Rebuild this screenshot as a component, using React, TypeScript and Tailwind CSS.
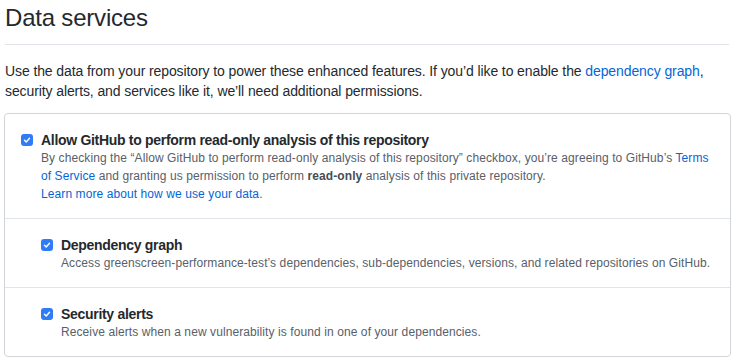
function Check() {
  return (
    <span className="mt-[3px] flex h-[12px] w-[12px] shrink-0 items-center justify-center rounded-[3px] bg-[#2f7cf6]">
      <svg viewBox="0 0 12 12" className="h-[10px] w-[10px]" fill="none">
        <path d="M3 6.2 L5.1 8.3 L9 3.8" stroke="white" strokeWidth="1.7" strokeLinecap="round" strokeLinejoin="round" />
      </svg>
    </span>
  );
}

export default function App() {
  return (
    <div className="min-h-[361px] w-[734px] bg-white px-[5px] text-[#24292e]" style={{ fontFamily: "'Liberation Sans', Arial, sans-serif" }}>
      <div className="border-b border-[#e1e4e8] pb-[11px] pt-[3px]">
        <h2 className="text-[24px] font-normal leading-[30px] tracking-[-0.2px]">Data services</h2>
      </div>

      <p className="mt-[16px] text-[14px] leading-[20px] tracking-[-0.1px]">
        Use the data from your repository to power these enhanced features. If you’d like to enable the{" "}
        <a className="text-[#0366d6]">dependency graph</a>, security alerts, and services like it, we’ll need additional
        permissions.
      </p>

      <div className="mt-[12px] mr-[-2px] ml-[-1px] rounded-[4px] border border-[#d1d5da]">
        <div className="flex gap-[8px] border-b border-[#e1e4e8] px-[16px] pb-[15px] pt-[17px]">
          <Check />
          <div>
            <div className="text-[14px] font-bold leading-[18px] tracking-[-0.3px]">Allow GitHub to perform read-only analysis of this repository</div>
            <p className="text-[12px] leading-[18px] tracking-[0.09px] text-[#586069]">
              By checking the “Allow GitHub to perform read-only analysis of this repository” checkbox, you’re agreeing to
              GitHub’s <a className="text-[#0366d6]">Terms of Service</a> and granting us permission to perform{" "}
              <strong className="font-bold text-[#444d56]">read-only</strong> analysis of this private repository.
              <br />
              <a className="text-[#0366d6]">Learn more about how we use your data</a>.
            </p>
          </div>
        </div>

        <div className="flex gap-[8px] border-b border-[#e1e4e8] pb-[15px] pl-[36px] pr-[16px] pt-[17px]">
          <Check />
          <div>
            <div className="text-[14px] font-bold leading-[18px] tracking-[-0.3px]">Dependency graph</div>
            <p className="text-[12px] leading-[18px] tracking-[0.09px] text-[#586069]">
              Access greenscreen-performance-test’s dependencies, sub-dependencies, versions, and related repositories on
              GitHub.
            </p>
          </div>
        </div>

        <div className="flex gap-[8px] pb-[15px] pl-[36px] pr-[16px] pt-[17px]">
          <Check />
          <div>
            <div className="text-[14px] font-bold leading-[18px] tracking-[-0.3px]">Security alerts</div>
            <p className="text-[12px] leading-[18px] tracking-[0.09px] text-[#586069]">
              Receive alerts when a new vulnerability is found in one of your dependencies.
            </p>
          </div>
        </div>
      </div>
    </div>
  );
}
